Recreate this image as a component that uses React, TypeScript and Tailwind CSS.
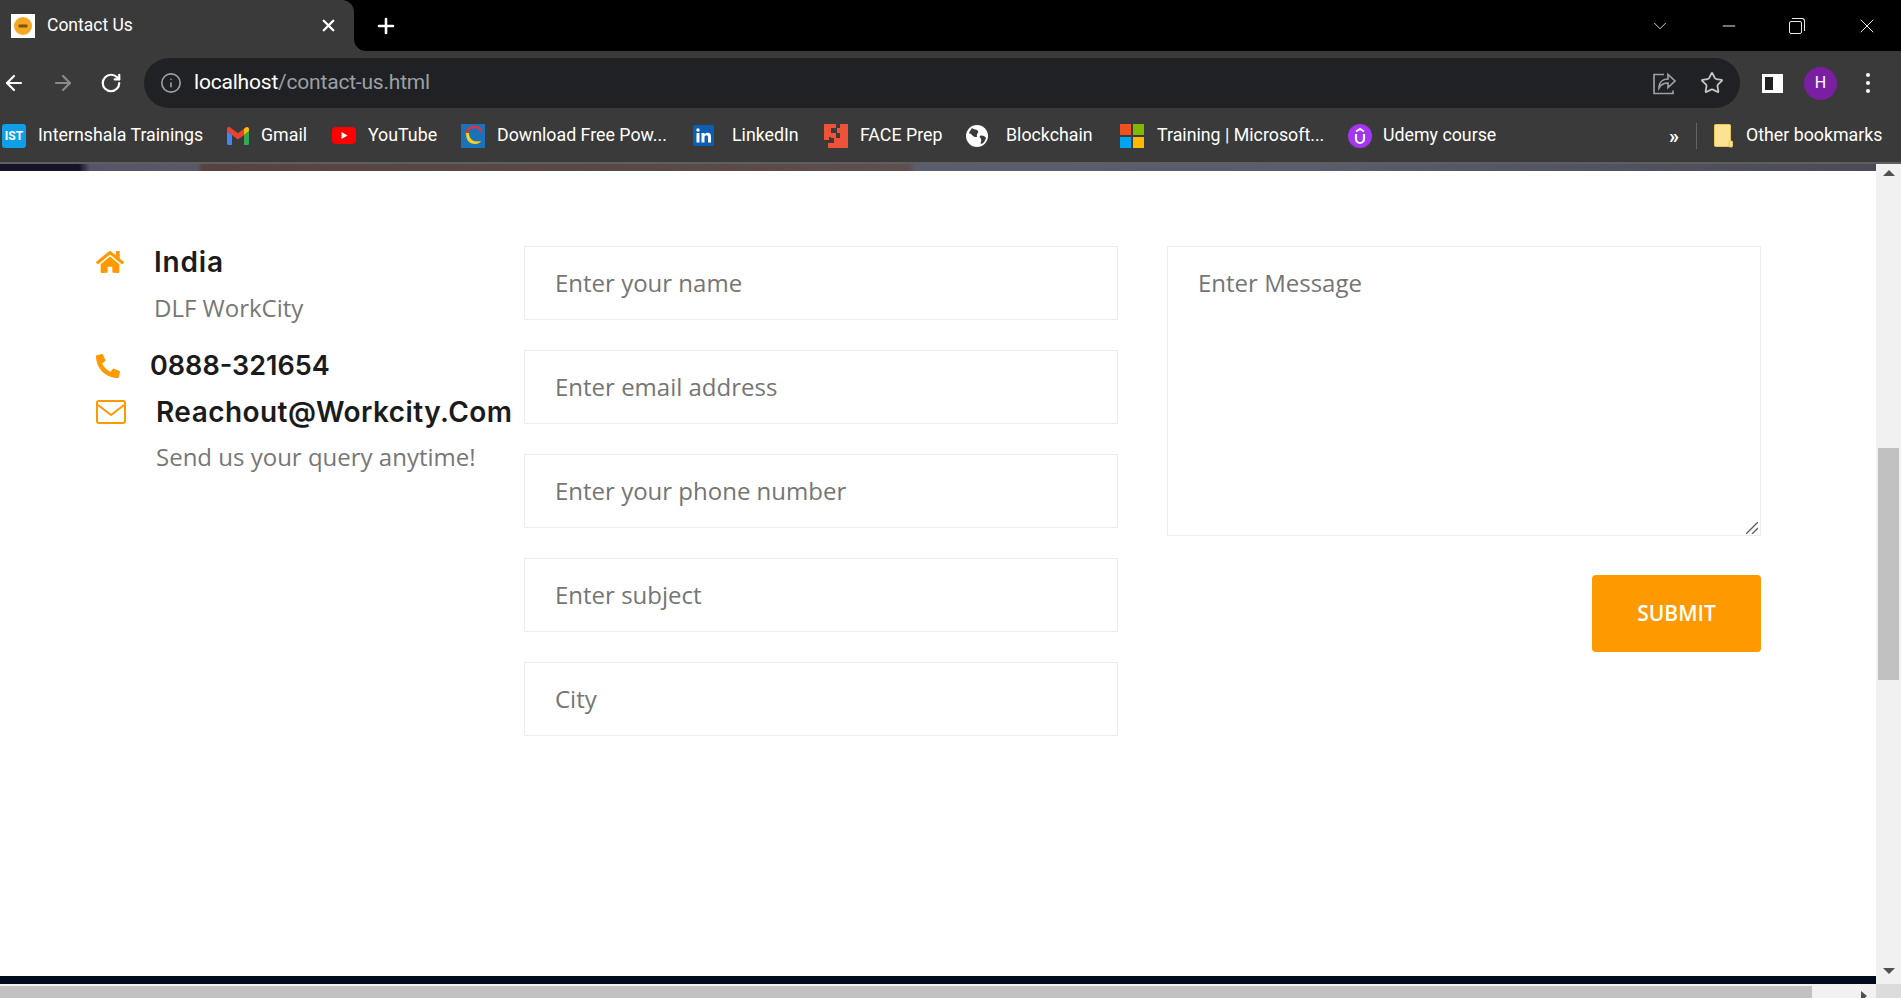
import { ReactNode } from 'react'
import { ArrowLeft, ArrowRight, RotateCw, Info, Star, X, Plus, ChevronDown, Minus } from 'lucide-react'
import { FaHome, FaPhoneAlt } from 'react-icons/fa'

const fieldClass =
  "block w-full border border-[#ececec] bg-white px-[30px] text-[24px] font-['Open_Sans',sans-serif] text-[#555] outline-none placeholder:text-[#757575]"

function Ist() {
  return (
    <span className="flex h-[24px] w-[24px] items-center justify-center rounded-[3px] bg-[#0f9fe8] text-[12px] font-bold text-white">
      IST
    </span>
  )
}

function Gmail() {
  return (
    <svg width="22" height="18" viewBox="0 0 22 18">
      <path d="M0 4v12.500a1.500 1.500 0 0 0 1.500 1.500H5V8z" fill="#4285f4" />
      <path d="M22 4v12.500a1.500 1.500 0 0 1-1.500 1.500H17V8z" fill="#34a853" />
      <path d="M5 8 0 4V2C0 .3 2-.5 3.300.5L5 1.800 11 6.300 17 1.800V8l-6 4.500z" fill="#ea4335" />
      <path d="M17 1.800 18.700.5C20-.5 22 .3 22 2v2l-5 4z" fill="#fbbc04" />
    </svg>
  )
}

function YouTube() {
  return (
    <svg width="24" height="17" viewBox="0 0 24 17">
      <rect width="24" height="17" rx="4" fill="#ff0000" />
      <path d="M9.500 5v7l6-3.500z" fill="#fff" />
    </svg>
  )
}

function PowerBi() {
  return (
    <svg width="24" height="24" viewBox="0 0 24 24">
      <rect width="24" height="24" fill="#1b72b8" />
      <path d="M5 11C5 6 9 3 14 3c3 0 6 1.500 6 5" fill="none" stroke="#e2313f" strokeWidth="2.500" />
      <path d="M5 9c0 7 3 11 9 11 3 0 5-1 6-3-2 .5-6 1-9-1-2-2-3-4-3-7z" fill="#f6d21a" />
    </svg>
  )
}

function LinkedIn() {
  return (
    <svg width="21" height="21" viewBox="0 0 21 21">
      <rect width="21" height="21" rx="2" fill="#0a5fb4" />
      <rect x="3.500" y="8" width="3" height="9.500" fill="#fff" />
      <circle cx="5" cy="5" r="1.700" fill="#fff" />
      <path d="M8.500 8h3v1.400c.6-1 1.700-1.600 3-1.600 2.400 0 3.500 1.500 3.500 4v5.700h-3v-5c0-1.400-.4-2.200-1.600-2.200-1.300 0-1.900.9-1.900 2.300v4.900h-3z" fill="#fff" />
    </svg>
  )
}

function FacePrep() {
  return (
    <svg width="24" height="24" viewBox="0 0 24 24">
      <path d="M0 0h12v4H7v5h5v5H7v-1H5v3H0z" fill="#ee5238" />
      <path d="M16 0h8v24H4v-5h6v-5h6V9h-3V4h3z" fill="#ee5238" />
    </svg>
  )
}

function Globe() {
  return (
    <svg width="22" height="22" viewBox="0 0 22 22">
      <circle cx="11" cy="11" r="11" fill="#fff" />
      <path d="M6 3c2 2 5 1 6 3s-2 3-1 5-4 1-5-1-3-1-3-2 2-3 3-5zM14 11c2-1 5 0 6 2-1 3-3 6-5 6-1-2 1-3 0-5s-2-2-1-3z" fill="#3a3a3a" />
    </svg>
  )
}

function Windows() {
  return (
    <span className="grid h-[24px] w-[24px] grid-cols-2 gap-[2px]">
      <span className="bg-[#f25022]" />
      <span className="bg-[#7fba00]" />
      <span className="bg-[#00a4ef]" />
      <span className="bg-[#ffb900]" />
    </span>
  )
}

function Udemy() {
  return (
    <svg width="24" height="24" viewBox="0 0 24 24">
      <circle cx="12" cy="12" r="12" fill="#a435f0" />
      <path d="M8 10v5a4 4 0 0 0 8 0v-5" fill="none" stroke="#fff" strokeWidth="2.200" />
      <path d="M8 7.500 12 5l4 2.500" fill="none" stroke="#fff" strokeWidth="2" />
    </svg>
  )
}

function Folder() {
  return (
    <svg width="19" height="24" viewBox="0 0 19 24">
      <path d="M.500 1.500a1 1 0 0 1 1-1h14a1 1 0 0 1 1 1v21h-15a1 1 0 0 1-1-1z" fill="#fde293" stroke="#e8c65c" />
      <rect x="15" y="17" width="3.500" height="6" rx="1" fill="#fde293" stroke="#e8c65c" />
    </svg>
  )
}

function ShareIcon() {
  return (
    <svg width="24" height="24" viewBox="0 0 24 24" fill="none" stroke="#9aa0a6" strokeWidth="1.700">
      <path d="M12 3.500H2v19h19v-3" />
      <path d="M7 17c0-6 4-9 9-9V3.500l7 6.500-7 6.500V12c-4 0-7 1.500-9 5z" />
    </svg>
  )
}

const bookmarks: { label: string; icon: ReactNode; itemClass: string; iconClass: string }[] = [
  { label: 'Internshala Trainings', icon: <Ist />, itemClass: 'w-[225px]', iconClass: 'w-[36px]' },
  { label: 'Gmail', icon: <Gmail />, itemClass: 'w-[105px]', iconClass: 'w-[34px]' },
  { label: 'YouTube', icon: <YouTube />, itemClass: 'w-[129px]', iconClass: 'w-[36px]' },
  { label: 'Download Free Pow...', icon: <PowerBi />, itemClass: 'w-[232px]', iconClass: 'w-[36px]' },
  { label: 'LinkedIn', icon: <LinkedIn />, itemClass: 'w-[131px]', iconClass: 'w-[39px]' },
  { label: 'FACE Prep', icon: <FacePrep />, itemClass: 'w-[142px]', iconClass: 'w-[36px]' },
  { label: 'Blockchain', icon: <Globe />, itemClass: 'w-[154px]', iconClass: 'w-[40px]' },
  { label: 'Training | Microsoft...', icon: <Windows />, itemClass: 'w-[228px]', iconClass: 'w-[37px]' },
  { label: 'Udemy course', icon: <Udemy />, itemClass: 'w-[321px]', iconClass: 'w-[35px]' },
]

function Chrome() {
  return (
    <div className="h-[164px] shrink-0 border-b-2 border-[#5e5e5e] bg-[#3a3a3a] font-['Roboto',sans-serif] text-white">
      {/* tab strip */}
      <div className="flex h-[51px] bg-black">
        <div className="flex w-[354px] items-center rounded-tr-[12px] bg-[#3a3a3a] pl-[11px] pr-[16px]">
          <span className="flex h-[24px] w-[24px] items-center justify-center bg-white">
            <svg width="20" height="20" viewBox="0 0 20 20">
              <circle cx="10" cy="10" r="9" fill="#f5a623" />
              <rect x="5.500" y="8.500" width="9" height="3" rx="1" fill="#7a5512" />
            </svg>
          </span>
          <span className="ml-[12px] flex-1 text-[17.5px]">Contact Us</span>
          <X size={19} strokeWidth={3} />
        </div>
        <div className="flex w-[12px] flex-col">
          <div className="flex-1" />
          <div className="h-[12px] bg-[#3a3a3a]">
            <div className="h-full rounded-bl-[12px] bg-black" />
          </div>
        </div>
        <div className="ml-[8px] flex items-center">
          <Plus size={24} strokeWidth={2.600} />
        </div>
        <div className="ml-auto flex items-center pr-[22px] text-[#e8e8e8]">
          <ChevronDown size={22} strokeWidth={1} className="mr-[48px]" />
          <Minus size={20} strokeWidth={1.200} className="mr-[50px]" />
          <span className="relative mr-[50px] h-[16px] w-[16px]">
            <span className="absolute bottom-0 left-0 h-[13px] w-[13px] rounded-[2px] border border-[#e8e8e8] bg-black" />
            <span className="absolute right-0 top-0 h-[13px] w-[13px] rounded-tr-[3px] border-r border-t border-[#e8e8e8]" />
          </span>
          <X size={24} strokeWidth={1} />
        </div>
      </div>
      {/* address row */}
      <div className="flex h-[64px] items-center">
        <ArrowLeft size={24} strokeWidth={2.200} className="ml-[2px]" />
        <ArrowRight size={24} strokeWidth={2.200} className="ml-[25px] text-[#8a8a8a]" />
        <RotateCw size={22} strokeWidth={2.400} className="ml-[25px]" />
        <div className="ml-[22px] flex h-[50px] w-[1596px] items-center rounded-full bg-[#202124] pl-[16px] pr-[16px]">
          <Info size={22} strokeWidth={1.800} className="text-[#9aa0a6]" />
          <span className="ml-[12px] flex-1 text-[21px] tracking-[-0.2px]">
            localhost<span className="text-[#9aa0a6]">/contact-us.html</span>
          </span>
          <ShareIcon />
          <Star size={24} strokeWidth={1.800} className="ml-[24px] text-[#c4c7c5]" />
        </div>
        <span className="ml-[22px] flex h-[19px] w-[21px] justify-start border-[3px] border-r-[10px] border-white bg-[#202124]" />
        <span className="ml-[21px] flex h-[33px] w-[33px] items-center justify-center rounded-full bg-[#7b1fa2] text-[16px]">H</span>
        <span className="ml-[29px] flex flex-col gap-[4px]">
          <span className="h-[4px] w-[4px] rounded-full bg-white" />
          <span className="h-[4px] w-[4px] rounded-full bg-white" />
          <span className="h-[4px] w-[4px] rounded-full bg-white" />
        </span>
      </div>
      {/* bookmarks */}
      <div className="flex h-[47px] items-center pb-[6px] pl-[2px] text-[17.8px]">
        {bookmarks.map((b) => (
          <div key={b.label} className={`flex items-center ${b.itemClass}`}>
            <span className={`flex shrink-0 items-center ${b.iconClass}`}>{b.icon}</span>
            <span className="whitespace-nowrap">{b.label}</span>
          </div>
        ))}
        <span className="text-[20px] font-bold">»</span>
        <span className="ml-[17px] h-[26px] w-px bg-[#666]" />
        <span className="ml-[17px] flex w-[32px] items-center">
          <Folder />
        </span>
        <span className="whitespace-nowrap">Other bookmarks</span>
      </div>
    </div>
  )
}

function ContactInfo() {
  return (
    <div className="w-[524px] shrink-0 pl-[96px] font-['Inter',sans-serif] text-[#1b1b1b]">
      <div className="flex items-center">
        <FaHome className="w-[58px] shrink-0 pr-[30px] text-[28px] text-[#ff9900]" />
        <span className="text-[28px] font-semibold leading-[32px] tracking-[0.8px]">India</span>
      </div>
      <p className="ml-[58px] mt-[14px] font-['Open_Sans',sans-serif] text-[24px] leading-[32px] text-[#777]">DLF WorkCity</p>
      <div className="mt-[26px] flex items-center">
        <FaPhoneAlt className="w-[54px] shrink-0 pr-[30px] text-[24px] text-[#ff9900]" />
        <span className="text-[27px] font-semibold leading-[32px]">0888-321654</span>
      </div>
      <div className="mt-[14px] flex items-center">
        <span className="w-[60px] shrink-0">
          <svg width="30" height="24" viewBox="0 0 30 24" fill="none" stroke="#ff9900" strokeWidth="2">
            <rect x="1" y="1" width="28" height="22" rx="2" />
            <path d="M2 5l13 10L28 5" />
          </svg>
        </span>
        <span className="whitespace-nowrap text-[28px] font-semibold leading-[32px] tracking-[0.45px]">Reachout@Workcity.Com</span>
      </div>
      <p className="ml-[60px] mt-[13px] whitespace-nowrap font-['Open_Sans',sans-serif] text-[24px] leading-[32px] text-[#777]">
        Send us your query anytime!
      </p>
    </div>
  )
}

function PageBody() {
  return (
    <div className="flex flex-1 items-start bg-white pt-[75px]">
      <ContactInfo />
      <div className="flex w-[594px] shrink-0 flex-col gap-[30px]">
        <input className={`${fieldClass} h-[74px] pb-[2px]`} placeholder="Enter your name" />
        <input className={`${fieldClass} h-[74px] pb-[2px]`} placeholder="Enter email address" />
        <input className={`${fieldClass} h-[74px] pb-[2px]`} placeholder="Enter your phone number" />
        <input className={`${fieldClass} h-[74px] pb-[2px]`} placeholder="Enter subject" />
        <input className={`${fieldClass} h-[74px] pb-[2px]`} placeholder="City" />
      </div>
      <div className="ml-[49px] flex w-[594px] shrink-0 flex-col items-end">
        <div className="relative w-full">
          <textarea className={`${fieldClass} h-[290px] resize-none py-[20px] leading-[32px]`} placeholder="Enter Message" />
          {/* resize grip */}
          <svg className="absolute bottom-[2px] right-[3px]" width="12" height="12" viewBox="0 0 12 12" stroke="#5a5a5a" strokeWidth="1.300">
            <path d="M0 12 12 0M6 12l6-6" />
          </svg>
        </div>
        <button className="mt-[39px] h-[77px] w-[169px] rounded-[4px] bg-[#ff9900] font-['Open_Sans',sans-serif] text-[21px] font-semibold text-white">
          SUBMIT
        </button>
      </div>
    </div>
  )
}

export default function App() {
  return (
    <div className="flex h-[998px] w-[1901px] flex-col overflow-hidden bg-white">
      <Chrome />
      <div className="flex min-h-0 flex-1">
        <div className="flex min-w-0 flex-1 flex-col">
          {/* hero image bottom edge, cut off by the scroll position */}
          <div className="h-[7px] shrink-0 bg-[linear-gradient(90deg,#15122a_0%,#15122a_4.200%,#55546a_4.800%,#5a5868_10.500%,#57423f_10.800%,#5c4a48_40%,#5f4f50_48.400%,#5b5c6e_48.800%,#5a5b6c_70%,#4a4a58_100%)]" />
          <PageBody />
          <div className="h-[8px] shrink-0 bg-[#000a1f]" />
          <div className="h-[14px] shrink-0 bg-[#f1f1f1] pt-[2px]">
            <div className="relative h-full w-[1812px] bg-[#c1c1c1]">
              <span className="absolute left-[1861px] top-[5px] h-0 w-0 border-y-[5px] border-l-[6px] border-y-transparent border-l-[#505050]" />
            </div>
          </div>
        </div>
        {/* vertical scrollbar */}
        <div className="flex w-[25px] shrink-0 flex-col bg-[#f1f1f1]">
          <div className="flex-1">
            <div className="mx-auto mt-[6px] h-0 w-0 border-x-[6px] border-b-[6px] border-x-transparent border-b-[#505050]" />
            <div className="mx-auto mt-[272px] h-[232px] w-[21px] bg-[#c1c1c1]" />
            <div className="mx-auto mt-[288px] h-0 w-0 border-x-[6px] border-t-[6px] border-x-transparent border-t-[#505050]" />
          </div>
          <div className="h-[14px] shrink-0 bg-[#dcdcdc]" />
        </div>
      </div>
    </div>
  )
}
